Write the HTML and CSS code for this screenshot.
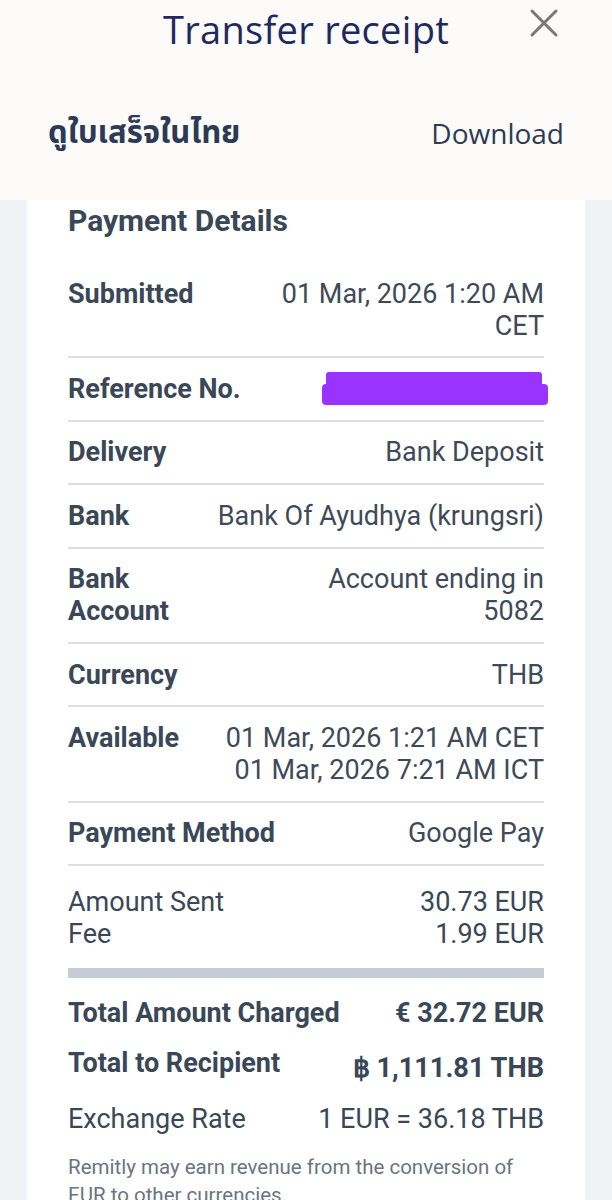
FILE: index.html
```html
<!DOCTYPE html>
<html lang="en">
<head>
  <meta charset="UTF-8">
  <meta name="viewport" content="width=device-width, initial-scale=1.0">
  <title>Transfer receipt</title>
  <link rel="stylesheet" href="styles.css">
</head>
<body>
  <header class="top">
    <div class="top-bar">
      <h1>Transfer receipt</h1>
      <button class="close" aria-label="Close">
        <svg width="30" height="30" viewBox="0 0 30 30">
          <path d="M3 3 L27 27 M27 3 L3 27" stroke="#777" stroke-width="3" stroke-linecap="round"/>
        </svg>
      </button>
    </div>
    <div class="top-actions">
      <a href="#" class="thai">ดูใบเสร็จในไทย</a>
      <a href="#" class="download">Download</a>
    </div>
  </header>

  <!-- Receipt card -->
  <main class="card">
    <h2>Payment Details</h2>

    <div class="row">
      <div class="label">Submitted</div>
      <div class="value">01 Mar, 2026 1:20 AM<br>CET</div>
    </div>
    <div class="row">
      <div class="label">Reference No.</div>
      <div class="value">
        <svg class="redact" width="226" height="34" viewBox="0 0 226 34">
          <rect x="4" y="0" width="216" height="16" rx="3" fill="#9933ff"/>
          <rect x="0" y="12" width="226" height="21" rx="4" fill="#9933ff"/>
        </svg>
      </div>
    </div>
    <div class="row">
      <div class="label">Delivery</div>
      <div class="value">Bank Deposit</div>
    </div>
    <div class="row">
      <div class="label">Bank</div>
      <div class="value">Bank Of Ayudhya (krungsri)</div>
    </div>
    <div class="row">
      <div class="label">Bank<br>Account</div>
      <div class="value">Account ending in<br>5082</div>
    </div>
    <div class="row">
      <div class="label">Currency</div>
      <div class="value">THB</div>
    </div>
    <div class="row">
      <div class="label">Available</div>
      <div class="value">01 Mar, 2026 1:21 AM CET<br>01 Mar, 2026 7:21 AM ICT</div>
    </div>
    <div class="row">
      <div class="label">Payment Method</div>
      <div class="value">Google Pay</div>
    </div>

    <div class="amounts">
      <div class="line"><span>Amount Sent</span><span>30.73 EUR</span></div>
      <div class="line"><span>Fee</span><span>1.99 EUR</span></div>
    </div>

    <div class="total-bar"></div>

    <div class="total"><span>Total Amount Charged</span><span>€ 32.72 EUR</span></div>
    <div class="total recipient"><span>Total to Recipient</span><span class="big">฿ 1,111.81 THB</span></div>
    <div class="line rate"><span>Exchange Rate</span><span>1 EUR = 36.18 THB</span></div>

    <p class="note">Remitly may earn revenue from the conversion of EUR to other currencies.</p>
  </main>
</body>
</html>
```

FILE: styles.css
```css
/* General */
body {
  margin: 0;
  background: #f1f2f5;
  font-family: Roboto, "Noto Sans", sans-serif;
  color: #3a4757;
}

a {
  text-decoration: none;
}

/* Header */
.top {
  background: #fcfbf9;
  height: 200px;
}

.top-bar {
  position: relative;
  height: 58px;
  display: flex;
  align-items: center;
  justify-content: center;
}

.top-bar h1 {
  margin: 0;
  font-family: "Open Sans", sans-serif;
  font-weight: 500;
  font-size: 38px;
  color: #1f2a5c;
  letter-spacing: 0.3px;
}

.close {
  position: absolute;
  right: 53px;
  top: 8px;
  background: none;
  border: 0;
  padding: 0;
}

.top-actions {
  display: flex;
  justify-content: space-between;
  align-items: center;
  height: 40px;
  margin-top: 55px;
  padding: 0 48px;
}

.thai {
  font-family: "Noto Sans Thai", "Noto Sans", "DejaVu Sans", sans-serif;
  font-weight: 700;
  font-size: 31px;
  color: #2d3a55;
}

.download {
  font-family: "Open Sans", sans-serif;
  font-size: 28px;
  color: #2d3a55;
}

/* Card */
.card {
  background: #fff;
  margin: 0 27px;
  padding: 3px 41px 0;
}

.card h2 {
  margin: 0 0 24px;
  font-size: 30px;
  line-height: 36px;
  font-weight: 700;
  color: #3a4757;
}

.row {
  display: flex;
  justify-content: space-between;
  padding: 14.7px 0;
  border-bottom: 2px solid #dcdfe2;
  font-size: 27px;
  line-height: 32px;
}

.label {
  font-weight: 700;
}

.value {
  text-align: right;
  color: #3f4a59;
}

.redact {
  display: block;
  margin: -1px -4px -1px 0;
}

.amounts {
  padding: 20px 0 18px;
}

.line {
  display: flex;
  justify-content: space-between;
  font-size: 27px;
  line-height: 32px;
}

.total-bar {
  height: 10px;
  background: #c5ccd6;
}

.total {
  display: flex;
  justify-content: space-between;
  align-items: flex-start;
  font-size: 27px;
  line-height: 32px;
  font-weight: 700;
  margin-top: 19px;
}

.recipient {
  margin-top: 18px;
}

.big {
  font-size: 27.2px;
  margin-top: 5px;
}

.rate {
  margin-top: 19px;
}

.note {
  margin: 18px 0 0;
  font-size: 20.5px;
  line-height: 28px;
  color: #6b7480;
  padding-bottom: 20px;
}
```
